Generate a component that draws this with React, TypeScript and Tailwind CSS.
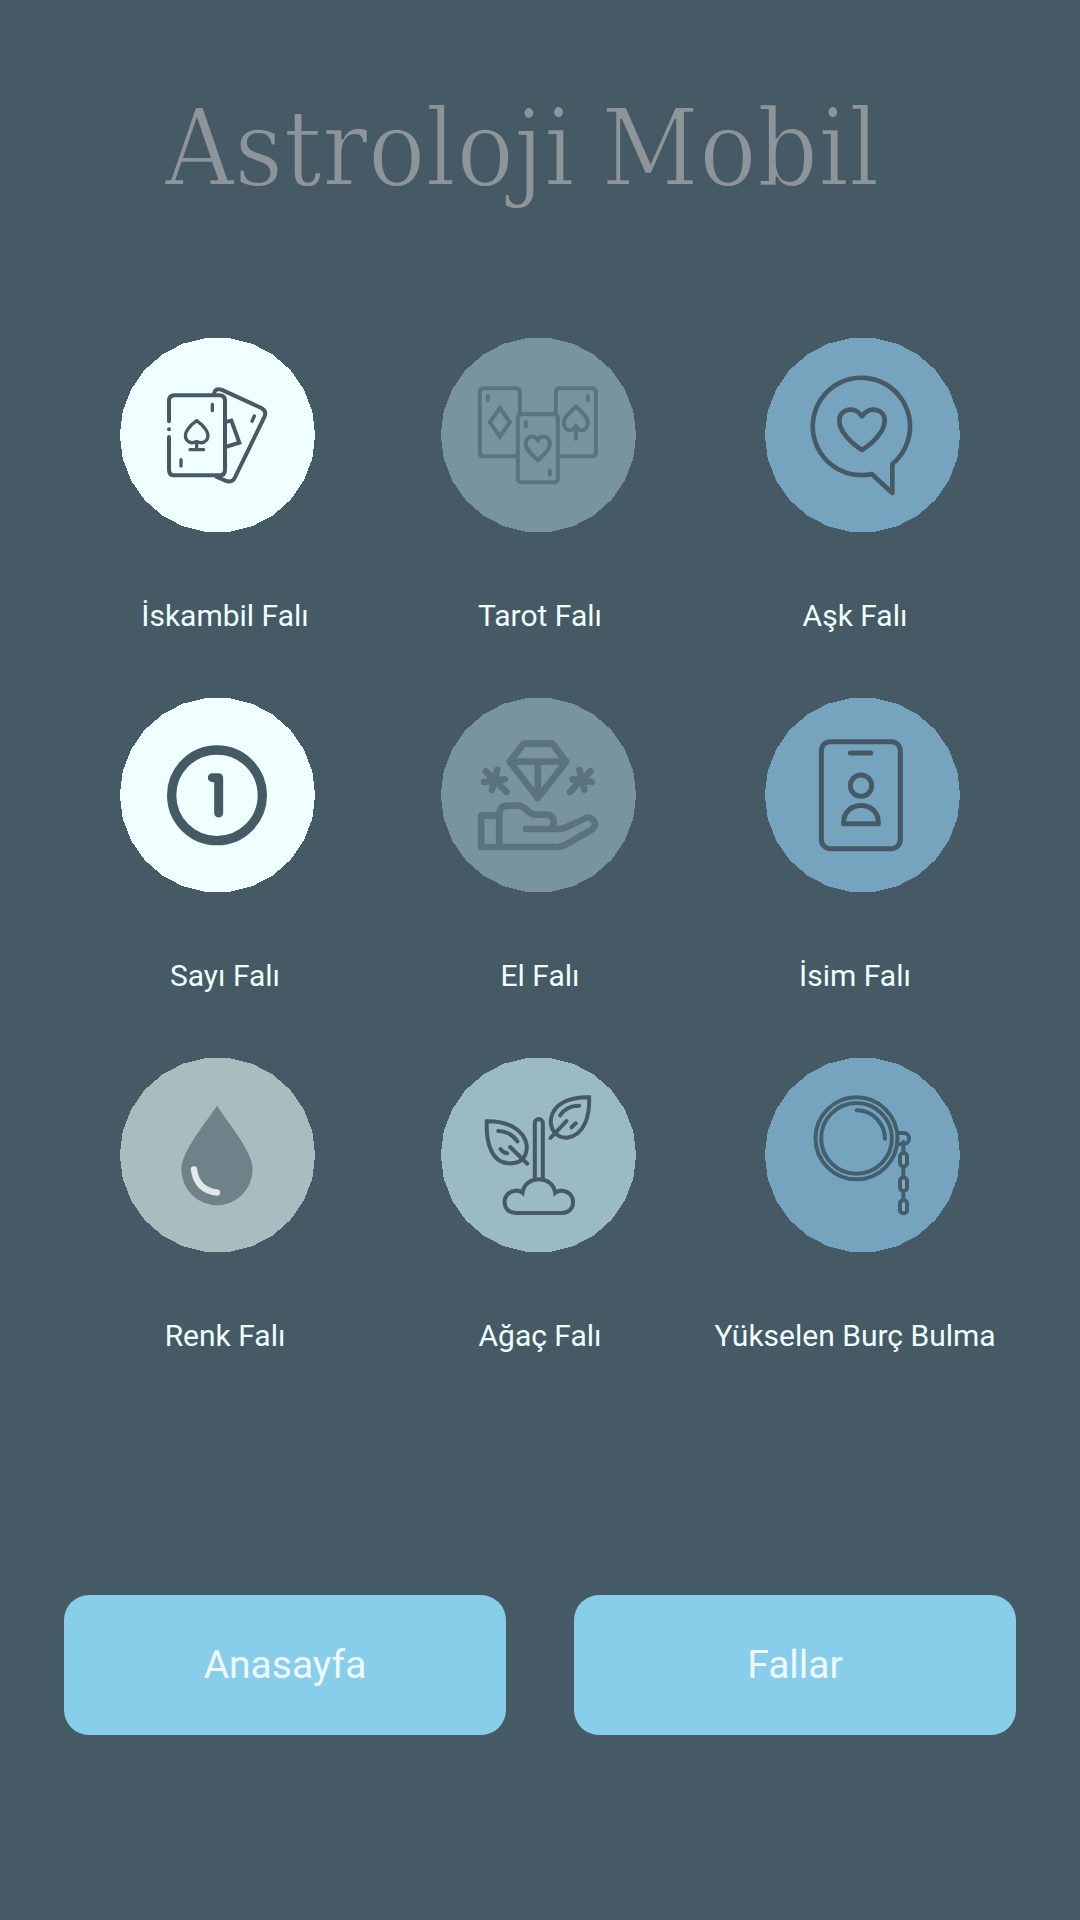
import type { ReactNode } from "react";

const DARK = "#455a64";
const MUTED = "#5b737e";

// disc outline with 26 flat sides
const DISC = Array.from({ length: 26 }, (_, i) => {
  const a = (i * 2 * Math.PI) / 26;
  return `${(293 * Math.cos(a)).toFixed(1)},${(293 * Math.sin(a)).toFixed(1)}`;
}).join(" ");

type DiscProps = { fill: string; x?: number; children: ReactNode };

const Disc = ({ fill, x = 322.5, children }: DiscProps) => (
  <svg viewBox="-292.5 -291 585 585" className="h-[195px] w-[195px] shrink-0 overflow-visible">
    <polygon points={DISC} fill={fill} shapeRendering="crispEdges" />
    <g
      transform={`translate(${-x} -314)`}
      fill="none"
      stroke={DARK}
      strokeWidth="12"
      strokeLinecap="round"
      strokeLinejoin="round"
    >
      {children}
    </g>
  </svg>
);

const Cards = () => (
  <Disc fill="#f0ffff">
    <path d="M177 273V212Q177 195 194 195H328Q345 195 345 212V418Q345 435 328 435H194Q177 435 177 418V320M177 296.500V297" />
    <path d="M312 191Q314 172 334 178L454 233Q470 241 464 258L374 443Q368 456 352 453L320 440" />
    <path d="M350 274L364 271L388 337L350 349" strokeLinejoin="miter" />
    <path d="M307 222V241M213 388V407M433 257L426 273" strokeWidth="10" />
    <path d="M260 334V357M240 358H281M260 333C248 340 237 337 230 329C217 309 240 285 260 271C280 285 303 309 290 329C283 337 272 340 260 333Z" strokeWidth="10" />
  </Disc>
);

const Tarot = () => (
  <Disc fill="#78949c" x={326}>
    <g stroke={MUTED}>
      <path d="M258 378H161Q150 378 150 367V186Q150 174 161 174H258Q270 174 270 186V247" />
      <path d="M378 247V186Q378 174 390 174H486Q498 174 498 186V367Q498 378 486 378H389" />
      <rect x="264" y="252" width="120" height="204" rx="11" />
      <path d="M210 233L240 276L210 319L180 276Z" strokeLinejoin="miter" />
      <path d="M324 390C307 374 289 359 288 342C287 316 317 310 324 331C331 310 361 316 360 342C359 359 341 374 324 390Z" />
      <path d="M438 286V325M438 287C426 311 396 297 403 271C406 255 427 242 438 228C449 242 470 255 473 271C480 297 450 311 438 287Z" />
      <path d="M174 197V210M474 197V210M288 275V288M360 420V433" />
    </g>
  </Disc>
);

const Love = () => (
  <Disc fill="#76a4be">
    <path d="M350 431A146 146 0 1 1 412 401V488Z" strokeWidth="14" />
    <path d="M321 359C285 337 253 301 253 271C253 235 300 225 321 258C342 225 389 235 389 271C389 301 357 337 321 359Z" strokeWidth="14" />
  </Disc>
);

const NumberOne = () => (
  <Disc fill="#f0ffff">
    <circle cx="321" cy="315" r="136" strokeWidth="28" />
    <path d="M307 262H326V368" strokeWidth="27" />
  </Disc>
);

const Hand = () => (
  <Disc fill="#78949c" x={326}>
    <g stroke={MUTED} strokeWidth="20">
      <path d="M281 160H368L409 214L324 323L240 214ZM240 214H409M324 214V318" />
      <path d="M208 470V376H154V470H382Q394 470 404 465L487 417C503 406 493 378 469 383L406 412Q396 416 386 416H289" />
      <path d="M208 376C208 354 218 346 235 346H263C292 346 293 373 315 373H348C369 373 376 389 369 408" />
      <path d="M168 243L230 305M202 239L186 299M163 275L225 267" />
      <path d="M482 243L420 305M449 239L464 298M428 267L486 275" />
      {/* solid hearts of the sparkles */}
      <path d="M192 262L204 274M458 262L446 274" strokeWidth="28" />
    </g>
  </Disc>
);

const IdCard = () => (
  <Disc fill="#76a4be">
    <g strokeWidth="15">
      <rect x="199" y="154" width="237" height="321" rx="27" />
      <path d="M286 188H347" />
      <circle cx="318" cy="286" r="32" />
      <path d="M266 400V394C269 329 367 329 370 394V400Z" />
    </g>
  </Disc>
);

const Drop = () => (
  <Disc fill="#abbcc1">
    <path
      d="M321 166C348 209 428 302 428 356A107 109 0 0 1 214 356C214 302 294 209 321 166Z"
      fill="#6e8389"
      stroke="none"
    />
    <path d="M252 357Q259 418 321 427" stroke="#e0e8ea" strokeWidth="19" />
  </Disc>
);

const Sprout = () => (
  <Disc fill="#9abac4" x={326}>
    <path d="M315 384V219C315 202 339 202 339 219V384" />
    <path d="M257 488C214 488 213 424 257 421Q270 420 278 427C285 373 369 373 376 427Q384 420 397 421C441 424 440 488 397 488Z" strokeLinejoin="miter" />
    <path d="M171 213C231 212 285 236 291 287C291 324 271 341 235 339C183 335 168 272 171 213Z" strokeLinejoin="miter" />
    <path d="M205 242Q242 243 263 273M212 296Q220 308 232 309M241 290L292 340" />
    <path d="M478 141C421 140 371 158 363 207C361 240 381 263 412 262C463 255 480 198 478 141Z" strokeLinejoin="miter" />
    <path d="M391 195Q410 165 448 166M438 219L425 231M410 212L362 263" />
  </Disc>
);

const Monocle = () => (
  <Disc fill="#76a4be" x={487.5}>
    <g stroke="#41606f">
      <circle cx="469.500" cy="264" r="115" stroke="#809fae" strokeWidth="8" />
      <circle cx="469.500" cy="264" r="123" />
      <circle cx="469.500" cy="264" r="106" />
      <path d="M470 180C518 180 554 219 555 265" />
      <path d="M599 248H611C633 248 632 281 611 281H599M610 275V304M610 350V379M610 423V448" />
      <g fill="#8faab7">
        <rect x="600" y="309" width="21" height="39" rx="9" />
        <rect x="600" y="382" width="21" height="39" rx="9" />
        <rect x="600" y="450" width="21" height="39" rx="9" />
      </g>
    </g>
  </Disc>
);

const rows = [
  { icons: [Cards, Tarot, Love], labels: ["İskambil Falı", "Tarot Falı", "Aşk Falı"] },
  { icons: [NumberOne, Hand, IdCard], labels: ["Sayı Falı", "El Falı", "İsim Falı"] },
  { icons: [Drop, Sprout, Monocle], labels: ["Renk Falı", "Ağaç Falı", "Yükselen Burç Bulma"] },
];

const App = () => {
  return (
    <main className="flex h-[1920px] w-[1080px] flex-col overflow-hidden bg-[#455a64] font-['Roboto',sans-serif]">
      <h1 className="h-[338px] pl-[165px] pt-[84px] font-['DejaVu_Serif_Condensed','DejaVu_Serif',serif] text-[106px] leading-[130px] tracking-[0.3px] [word-spacing:-4px] whitespace-nowrap text-[#8d959a] [-webkit-text-stroke:1.8px_#455a64]">
        Astroloji Mobil
      </h1>

      {rows.map((row) => (
        <section key={row.labels[0]} className="h-[360px]">
          <div className="grid grid-cols-[321px_324px_195px] pl-[120px]">
            {row.icons.map((Icon, idx) => (
              <Icon key={idx} />
            ))}
          </div>
          <div className="mx-auto mt-[63px] grid w-[945px] grid-cols-3 text-center text-[30px] leading-[40px] whitespace-nowrap text-[#f0ffff]">
            {row.labels.map((label) => (
              <span key={label}>{label}</span>
            ))}
          </div>
        </section>
      ))}

      {/* bottom navigation */}
      <nav className="mx-16 mt-[177px] flex justify-between text-[39px] text-[#f0f8ff]">
        <button className="h-[140px] w-[442px] rounded-[25px] bg-[#87ceeb]">Anasayfa</button>
        <button className="h-[140px] w-[442px] rounded-[25px] bg-[#87ceeb]">Fallar</button>
      </nav>
    </main>
  );
};

export default App;
